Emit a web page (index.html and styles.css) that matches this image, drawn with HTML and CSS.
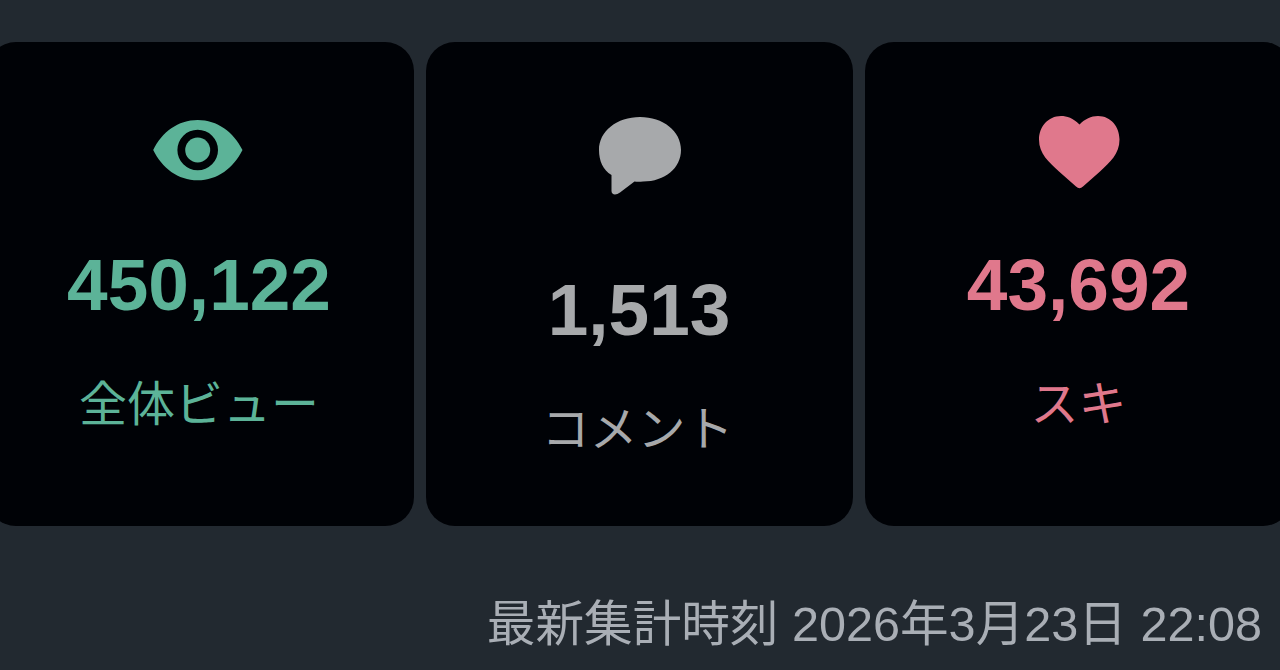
FILE: index.html
```html
<!DOCTYPE html>
<html lang="ja">
<head>
  <meta charset="UTF-8">
  <title>アクセス状況</title>
  <link rel="stylesheet" href="styles.css">
</head>
<body>
  <div class="stats">
    <div class="card view">
      <svg class="icon" viewBox="0 0 96 96">
        <path fill="currentColor" fill-rule="evenodd" d="M2.200 48C11 30 27 18 46.700 18S82.500 30 91.500 48C82.500 66 66.500 78.300 46.700 78.300S11 66 2.200 48zM46.700 27.700a20.300 20.300 0 1 0 0 40.600a20.300 20.300 0 1 0 0-40.600z"/>
        <circle cx="46.700" cy="48" r="12.500" fill="currentColor"/>
      </svg>
      <div class="number">450,122</div>
      <div class="label">全体ビュー</div>
    </div>

    <div class="card comment">
      <svg class="icon" viewBox="0 0 96 96">
        <path fill="currentColor" d="M49 15C72 15 90 29 90 48C90 66 74 79.500 52 79.500Q47 80 43.500 79.500L29 90.500C25 93.500 20.500 93 20.500 89V73C12 68 8 59 8 48C8 29 26 15 49 15z"/>
      </svg>
      <div class="number">1,513</div>
      <div class="label">コメント</div>
    </div>

    <div class="card like">
      <svg class="icon" viewBox="0 0 96 96">
        <path fill="currentColor" d="M48.500 22.500C42 16 36 14 30 14C17 14 8 25 8 37.500C8 52 18 60 28 69.500L45 84.500Q48.500 88 52 84.500L69 69.500C79 60 88.500 52 88.500 37.500C88.500 25 80 14 67 14C60 14 54 17 48.500 22.500z"/>
      </svg>
      <div class="number">43,692</div>
      <div class="label">スキ</div>
    </div>
  </div>

  <div class="updated">最新集計時刻 2026年3月23日 22:08</div>
</body>
</html>
```
FILE: styles.css
```css
body {
  margin: 0;
  height: 670px;
  overflow: hidden;
  background: #222930;
  font-family: "Liberation Sans", "Noto Sans CJK JP", sans-serif;
}

/* the row is wider than the page, so both outer cards are cut off */
.stats {
  display: grid;
  grid-template-columns: repeat(3, 427px);
  gap: 12px;
  margin-left: -13px;
  padding-top: 42px;
}

.card {
  box-sizing: border-box;
  height: 484px;
  padding-top: 60px;
  border-radius: 29px;
  background: #000206;
  display: flex;
  flex-direction: column;
  align-items: center;
  white-space: nowrap;
}

.view {
  color: #5cb398;
  padding-right: 3px;
}

.comment {
  color: #a7a9ab;
  padding-right: 1px;
}

.like {
  color: #e0788c;
}

.icon {
  width: 96px;
  height: 96px;
}

.number {
  margin-top: 47px;
  font-size: 73px;
  line-height: 80px;
  font-weight: bold;
}

.comment .number {
  margin-top: 72px;
}

.label {
  margin-top: 45px;
  font-size: 48px;
  line-height: 70px;
}

.comment .label {
  padding-right: 3px;
}

.updated {
  margin-top: 62px;
  padding-right: 18px;
  color: #a9aeb5;
  font-size: 48.600px;
  line-height: 72px;
  text-align: right;
  white-space: nowrap;
}
```
